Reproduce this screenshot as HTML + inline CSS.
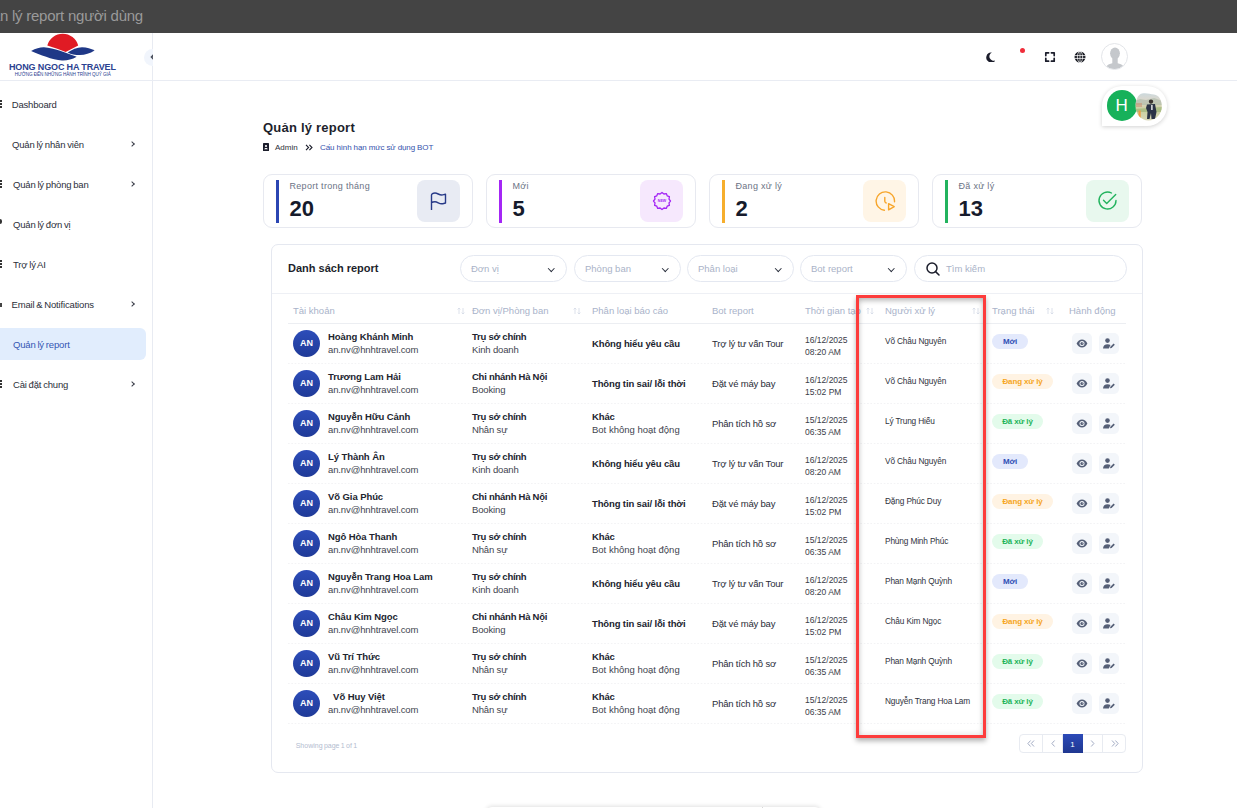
<!DOCTYPE html><html><head><meta charset="utf-8"><style>*{box-sizing:border-box;margin:0;padding:0}
html,body{width:1237px;height:808px;overflow:hidden;background:#fff;font-family:"Liberation Sans",sans-serif;color:#1f2230}
.abs{position:absolute}
svg{display:block}
#topbar{position:absolute;left:0;top:0;width:1237px;height:33px;background:#444444}
#topbar .t{position:absolute;top:7.1px;left:-27.7px;font-size:15px;color:#9a9a9a;white-space:nowrap;letter-spacing:-0.24px}
#side{position:absolute;left:0;top:33px;width:153px;height:775px;border-right:1px solid #e8ebf2;background:#fff}
#hdrline{position:absolute;left:0;top:80px;width:1237px;height:1px;background:#e9ecf3}
#logot{left:9px;top:61.6px;font-size:9px;font-weight:bold;color:#2a4190;white-space:nowrap;letter-spacing:-0.14px}
#logos{left:14.7px;top:71.6px;font-size:4.6px;color:#2a4190;white-space:nowrap;letter-spacing:-0.05px}
#collapse{left:144px;top:49px;width:17px;height:17px;border-radius:50%;background:#f1f5fc;clip-path:inset(0 9px 0 0)}
#collapse-chev{left:150.3px;top:55px;width:4.5px;height:4.5px;border-left:1.5px solid #4a4f5c;border-bottom:1.5px solid #4a4f5c;transform:rotate(45deg);clip-path:polygon(0 0,100% 0,0 100%)}
.mi{position:absolute;left:0;width:146px;height:32px;font-size:9.5px;color:#2c2f3a;white-space:nowrap;letter-spacing:-0.17px;word-spacing:-0.6px}
.mi span{position:absolute;top:11.3px}
.mi .chev{position:absolute;left:130px;top:14px;width:4px;height:4px;border-right:1px solid #3a3d48;border-top:1px solid #3a3d48;transform:rotate(45deg)}
.mi.active{background:#e1edfd;border-radius:6px;color:#3456b3;left:-10px;width:156px}
.mi.active span{margin-left:10px}
#avatar{left:1101px;top:43px;width:27px;height:27px}
#bubble{left:1101.5px;top:86px;width:65px;height:39.5px;background:#fff;border-radius:20px 20px 20px 0;box-shadow:0 1px 4px rgba(0,0,0,0.18)}
#bubH{left:1106.5px;top:90.2px;width:30.5px;height:30.5px;border-radius:50%;background:#17b15a;color:#fff;font-size:17px;text-align:center;line-height:31px}
#ptitle{left:263px;top:119.8px;font-size:13px;font-weight:bold;color:#1d1f2c;white-space:nowrap;letter-spacing:0.22px}
#bc1{left:275px;top:143px;font-size:8px;color:#2c2f3a;white-space:nowrap}
#bc2{left:320px;top:143px;font-size:8px;color:#3552ad;white-space:nowrap;letter-spacing:-0.12px}
.card{position:absolute;top:174px;width:210.3px;height:54px;border:1px solid #e7e9f0;border-radius:9px;background:#fff}
.card .bar{position:absolute;left:12px;top:4.5px;width:3px;height:43px}
.card .lbl{position:absolute;left:25.5px;top:6px;font-size:9px;color:#6b7385;white-space:nowrap;letter-spacing:0.3px}
.card .num{position:absolute;left:25.5px;top:20.5px;font-size:22px;font-weight:bold;color:#161b2c}
.card .ic{position:absolute;left:153px;top:4.8px;width:42.7px;height:42.5px;border-radius:8px}
#tcard{position:absolute;left:271px;top:244px;width:872px;height:529px;border:1px solid #e5e8f0;border-radius:7px;background:#fff}
#tctitle{left:288px;top:262px;font-size:11px;font-weight:bold;color:#1d1f2c;white-space:nowrap}
.pill{position:absolute;top:255px;width:107px;height:27px;border:1px solid #e4e8f1;border-radius:14px;font-size:9.5px;color:#aab3c8;white-space:nowrap;background:#fff}
.pill span{position:absolute;left:10px;top:7px}
.pill .dd{position:absolute;right:13px;top:9.5px;width:4.5px;height:4.5px;border-right:1.3px solid #2a2f3d;border-bottom:1.3px solid #2a2f3d;transform:rotate(45deg)}
.th{position:absolute;top:305px;font-size:9.5px;color:#a9b3ca;white-space:nowrap}
.sep{position:absolute;left:288px;width:838px;height:1.5px;background-image:linear-gradient(to right,#f3f3f5 50%,transparent 50%);background-size:3.33px 2px}
.av{position:absolute;left:293px;width:27px;height:27px;border-radius:50%;background:linear-gradient(180deg,#2d4db9,#1f3a98);color:#fff;font-size:9px;font-weight:bold;text-align:center;line-height:27px}
.nm{position:absolute;left:328px;font-size:9.5px;font-weight:bold;color:#22252f;white-space:nowrap;letter-spacing:-0.08px}
.em{position:absolute;left:328px;font-size:9.5px;color:#42454f;white-space:nowrap;letter-spacing:-0.12px}
.u1{position:absolute;left:472px;font-size:9.5px;font-weight:bold;color:#22252f;white-space:nowrap;letter-spacing:-0.25px}
.u2{position:absolute;left:472px;font-size:9.5px;color:#42454f;white-space:nowrap;letter-spacing:-0.15px}
.c1{position:absolute;left:592px;font-size:9.5px;font-weight:bold;color:#22252f;white-space:nowrap;letter-spacing:-0.13px}
.c2{position:absolute;left:592px;font-size:9.5px;color:#42454f;white-space:nowrap}
.bot{position:absolute;left:712px;font-size:9.5px;color:#2a2d38;white-space:nowrap;letter-spacing:-0.2px}
.dt{position:absolute;left:805px;font-size:8.5px;line-height:12px;color:#3a3d48;white-space:nowrap}
.hd{position:absolute;left:885px;font-size:8.3px;color:#30333d;white-space:nowrap;letter-spacing:-0.15px}
.badge{position:absolute;left:992px;height:15.2px;border-radius:8px;font-size:8px;font-weight:bold;text-align:center;line-height:15px;white-space:nowrap;letter-spacing:-0.12px}
.ab{position:absolute;width:20.3px;height:20.5px;border-radius:5px;background:#f3f6fa}
#showing{left:295.7px;top:742px;font-size:7px;color:#b3bccf;white-space:nowrap;word-spacing:-0.6px}
#pager{left:1018.5px;top:734px;width:107px;height:19px;border:1px solid #e8ebf1;border-radius:4px;background:#fff}
.pg{position:absolute;top:-1px;height:19px;border-right:1px solid #e8ebf1;font-size:10px;color:#9aa5c0;text-align:center;line-height:18px}
.pg.act{background:linear-gradient(180deg,#2c4ab8,#1f3790);color:#fff;font-size:8px;border-right:none;line-height:21px}
#redbox{left:856px;top:295px;width:130px;height:443px;border:3px solid #fd3c3c;box-shadow:0 3px 5px rgba(0,0,0,0.3), inset 0 4px 5px -1px rgba(0,0,0,0.2), inset 0 0 6px rgba(0,0,0,0.14)}
#botel{left:486px;top:806.5px;width:335px;height:20px;border-radius:6px;background:#fff;box-shadow:0 -1px 4px rgba(0,0,0,0.12)}
</style></head><body>
<div id="topbar"><div class="t">Quản lý report người dùng</div></div>
<div id="side"></div><div id="hdrline"></div>
<svg class="abs" style="left:25px;top:30px" width="80" height="35" viewBox="25 30 80 35">
<path d="M47.3 45.5 A16 16 0 0 1 78.2 45.6 C74 47.8, 70 49.8, 65.7 51.9 C60 49.6, 53 47.2, 47.3 45.5 Z" fill="#e01b24"/>
<path d="M31.1 51 C36 48.2, 40 47.1, 44 47.2 C54 47.8, 66 53, 76.7 56.8 C72 59.6, 67 60.7, 62 60.5 C52 59.9, 40 54.6, 31.1 51 Z" fill="#1f3887"/>
<path d="M67.7 52.4 C72 49.6, 77 47.3, 82 47.2 C87 47.2, 91 48.6, 94.6 50.6 C90 53.5, 85 55.1, 80 55.1 C75 55.1, 71 54.1, 67.7 52.4 Z" fill="#1f3887"/>
</svg>
<div class="abs" id="logot">HONG NGOC HA TRAVEL</div>
<div class="abs" id="logos">HƯỚNG ĐẾN NHỮNG HÀNH TRÌNH QUÝ GIÁ</div>
<div class="abs" style="left:140px;top:45px;width:12.5px;height:25px;overflow:hidden"><div class="abs" style="left:4px;top:3.5px;width:17px;height:17px;border-radius:50%;background:#f1f5fc"></div><svg class="abs" style="left:9.5px;top:8px" width="6" height="8" viewBox="0 0 6 8"><path d="M4.5 1L1.5 4L4.5 7" stroke="#4a4f5c" stroke-width="1.6" fill="none"/></svg></div>
<div class="mi" style="top:88px"><span style="left:11.7px">Dashboard</span></div>
<div class="mi" style="top:128px"><span style="left:12px">Quản lý nhân viên</span><i class="chev"></i></div>
<div class="mi" style="top:168px"><span style="left:13px">Quản lý phòng ban</span><i class="chev"></i></div>
<div class="mi" style="top:208px"><span style="left:13px">Quản lý đơn vị</span></div>
<div class="mi" style="top:248px"><span style="left:13px">Trợ lý AI</span></div>
<div class="mi" style="top:288px"><span style="left:11.5px">Email &amp; Notifications</span><i class="chev"></i></div>
<div class="mi active" style="top:328px"><span style="left:13px">Quản lý report</span></div>
<div class="mi" style="top:368px"><span style="left:13px">Cài đặt chung</span><i class="chev"></i></div>
<div class="abs" style="left:0;top:100px;width:2px;height:2px;background:#333"></div><div class="abs" style="left:0;top:103px;width:2px;height:2px;background:#333"></div><div class="abs" style="left:0;top:106px;width:2px;height:2px;background:#333"></div>
<div class="abs" style="left:0;top:180px;width:2px;height:2px;background:#333"></div><div class="abs" style="left:0;top:183px;width:2px;height:2px;background:#333"></div><div class="abs" style="left:0;top:186px;width:2px;height:2px;background:#333"></div>
<div class="abs" style="left:0;top:219px;width:2px;height:5px;background:#333;border-radius:0 2px 2px 0"></div>
<div class="abs" style="left:0;top:260px;width:2px;height:2px;background:#333"></div><div class="abs" style="left:0;top:263px;width:2px;height:2px;background:#333"></div><div class="abs" style="left:0;top:266px;width:2px;height:2px;background:#333"></div>
<div class="abs" style="left:0;top:303px;width:2px;height:4px;background:#444"></div>
<div class="abs" style="left:0;top:380px;width:2px;height:2px;background:#333"></div><div class="abs" style="left:0;top:383px;width:2px;height:2px;background:#333"></div><div class="abs" style="left:0;top:386px;width:2px;height:2px;background:#333"></div>
<svg class="abs" style="left:985.6px;top:51.6px" width="9.9" height="10.8" viewBox="0 0 11 12"><path d="M6.5 0.6 A5.6 5.6 0 1 0 10.6 9.2 A4.6 4.6 0 0 1 6.5 0.6 Z" fill="#1b1d2b"/></svg>
<div class="abs" style="left:1020px;top:48px;width:5px;height:5px;border-radius:50%;background:#f02d3a"></div>
<svg class="abs" style="left:1044px;top:51px" width="12" height="12" viewBox="0 0 12 12"><path d="M1.8 4.6V1.8H4.6M7.4 1.8H10.2V4.6M10.2 7.4V10.2H7.4M4.6 10.2H1.8V7.4" stroke="#1b1d2b" stroke-width="1.7" fill="none" stroke-linecap="round" stroke-linejoin="round"/></svg>
<svg class="abs" style="left:1074.3px;top:50.8px" width="12" height="12" viewBox="0 0 12 12"><circle cx="6" cy="6" r="5.5" fill="#15171f"/><g stroke="#fff" fill="none"><path d="M0.3 4.6H11.7M0.3 7.4H11.7" stroke-width="0.8"/><path d="M6 0.3V11.7" stroke-width="0.7"/><ellipse cx="6" cy="6" rx="2.6" ry="5.6" stroke-width="0.7"/></g></svg>
<div class="abs" id="avatar"><svg width="27" height="27" viewBox="0 0 27 27"><defs><clipPath id="avc"><circle cx="13.5" cy="13.5" r="12.6"/></clipPath></defs><circle cx="13.5" cy="13.5" r="12.6" fill="#fff"/><g clip-path="url(#avc)" fill="#c5c8cc"><ellipse cx="14" cy="10.3" rx="4.9" ry="5.9"/><path d="M11.3 14 h5.4 v6.3 c2.3 0.6 4.4 1.3 5.4 2.6 V27 H5.8 v-4.1 c1-1.3 3.1-2 5.5-2.6 z"/></g><circle cx="13.5" cy="13.5" r="13" fill="none" stroke="#e3e5e9" stroke-width="1"/></svg></div>
<div class="abs" id="bubble"></div>
<div class="abs" id="bubH">H</div>
<svg class="abs" style="left:1134px;top:92px" width="29" height="29" viewBox="0 0 29 29"><defs><clipPath id="phc"><path d="M1.5 14.5 C1.5 8 4 2.5 8 1.5 C12 0.5 16 2 20 2.5 C25 3 27.8 8 27.8 14.5 C27.8 22 22 28.5 14.5 28.5 C7 28.5 1.5 22 1.5 14.5 Z"/></clipPath><linearGradient id="sky" x1="0" y1="0" x2="0" y2="1"><stop offset="0" stop-color="#c9d9e0"/><stop offset="0.35" stop-color="#e2d8c8"/><stop offset="0.6" stop-color="#c8cf9e"/><stop offset="1" stop-color="#dad7b8"/></linearGradient></defs><g clip-path="url(#phc)"><rect width="29" height="29" fill="url(#sky)"/><path d="M0 9 L6 7 L12 8 L20 6 L29 9 V13 H0Z" fill="#a9b9a6" opacity="0.6"/><path d="M2 11 h6 v4 h-6z" fill="#c99474" opacity="0.6"/><path d="M0 17 L29 15 V20 H0Z" fill="#9fb77a" opacity="0.7"/><rect x="4.5" y="18.5" width="2.2" height="8" fill="#ee9c45"/><path d="M17 7.5c1.3 0 2.2 0.9 2.2 2.1s-0.9 2.1-2.2 2.1-2.2-0.9-2.2-2.1 0.9-2.1 2.2-2.1z" fill="#3a3430"/><path d="M13 12.5 L21 12 L22.5 20 L21 27 H17.5 L17 21 L15.5 27 H13 L13.5 20 L12 16z" fill="#2b3346"/><path d="M17.2 13 h1.4 v5 h-1.4z" fill="#f4f4f4"/></g></svg>
<div class="abs" id="ptitle">Quản lý report</div>
<svg class="abs" style="left:263px;top:143px" width="6" height="8" viewBox="0 0 6 8"><rect x="0" y="0" width="6" height="8" rx="0.6" fill="#1b1d2b"/><circle cx="3" cy="3" r="1.1" fill="#fff"/><path d="M1.2 6.3c0.3-1 1-1.4 1.8-1.4s1.5 0.4 1.8 1.4z" fill="#fff"/></svg>
<div class="abs" id="bc1">Admin</div>
<svg class="abs" style="left:305px;top:144px" width="8" height="7" viewBox="0 0 8 7"><path d="M1 0.8L3.6 3.5L1 6.2M4.4 0.8L7 3.5L4.4 6.2" stroke="#1b1d2b" stroke-width="1.1" fill="none"/></svg>
<div class="abs" id="bc2">Cấu hình hạn mức sử dụng BOT</div>
<div class="card" style="left:263px"><div class="bar" style="background:#2b46b3"></div><div class="lbl">Report trong tháng</div><div class="num">20</div><div class="ic" style="background:#e8ebf3"><div class="abs" style="left:13px;top:12px"><svg width="17" height="19" viewBox="0 0 17 19"><path d="M1.5 18V3C1.5 2 3 1 5 1C7.5 1 9 3 11.5 3C13 3 14 2.6 15.5 2.2V11C14 11.4 13 11.8 11.5 11.8C9 11.8 7.5 9.8 5 9.8C3 9.8 2 10.4 1.5 10.8" stroke="#283a88" stroke-width="1.4" fill="none" stroke-linejoin="round"/></svg></div></div></div>
<div class="card" style="left:486px"><div class="bar" style="background:#a426f5"></div><div class="lbl">Mới</div><div class="num">5</div><div class="ic" style="background:#f6e8fd"><div class="abs" style="left:11.5px;top:11px"><svg width="20" height="20" viewBox="0 0 20 20"><path d="M10 1.5l1.9 1.5 2.4-.4.9 2.2 2.2.9-.4 2.4L18.5 10l-1.5 1.9.4 2.4-2.2.9-.9 2.2-2.4-.4L10 18.5l-1.9-1.5-2.4.4-.9-2.2-2.2-.9.4-2.4L1.5 10l1.5-1.9-.4-2.4 2.2-.9.9-2.2 2.4.4z" stroke="#a426f5" stroke-width="1.3" fill="none" stroke-linejoin="round"/><text x="10" y="11.3" font-size="3.6" text-anchor="middle" fill="#a426f5" font-family="Liberation Sans" font-weight="bold">NEW</text></svg></div></div></div>
<div class="card" style="left:709px"><div class="bar" style="background:#f6ae2d"></div><div class="lbl">Đang xử lý</div><div class="num">2</div><div class="ic" style="background:#fff5e6"><div class="abs" style="left:11.5px;top:11px"><svg width="21" height="21" viewBox="0 0 21 21"><path d="M9.4 19.2A9.2 9.2 0 1 1 19.5 10.8" stroke="#f7a52a" stroke-width="1.4" fill="none" stroke-linecap="round"/><path d="M9.8 6.5V10.2C9.8 11 10.4 11.6 11.2 12" stroke="#f7a52a" stroke-width="1.4" fill="none" stroke-linecap="round"/><path d="M13.6 12.6L19.2 15.6L13.6 18.8Z" stroke="#f7a52a" stroke-width="1.4" fill="none" stroke-linejoin="round"/></svg></div></div></div>
<div class="card" style="left:932px"><div class="bar" style="background:#22b35e"></div><div class="lbl">Đã xử lý</div><div class="num">13</div><div class="ic" style="background:#e8f8ee"><div class="abs" style="left:11px;top:10.5px"><svg width="21" height="21" viewBox="0 0 21 21"><path d="M19 10.5A8.5 8.5 0 1 1 14.5 3" stroke="#22b35e" stroke-width="1.4" fill="none" stroke-linecap="round"/><path d="M6.5 10.2l3.2 3.2 9-9" stroke="#22b35e" stroke-width="1.4" fill="none" stroke-linecap="round" stroke-linejoin="round"/></svg></div></div></div>
<div id="tcard"></div>
<div class="abs" id="tctitle">Danh sách report</div>
<div class="abs" style="left:272px;top:293px;width:870px;height:1px;background:#eef0f5"></div>
<div class="pill" style="left:460px"><span>Đơn vị</span><i class="dd"></i></div>
<div class="pill" style="left:574px"><span>Phòng ban</span><i class="dd"></i></div>
<div class="pill" style="left:687px"><span>Phân loại</span><i class="dd"></i></div>
<div class="pill" style="left:800px"><span>Bot report</span><i class="dd"></i></div>
<div class="pill" style="left:914px;width:213px"><svg class="abs" style="left:11px;top:6px" width="14" height="14" viewBox="0 0 14 14"><circle cx="6" cy="6" r="5" stroke="#1b1d2b" stroke-width="1.5" fill="none"/><path d="M9.6 9.6L13 13" stroke="#1b1d2b" stroke-width="1.5" stroke-linecap="round"/></svg><span style="left:31px">Tìm kiếm</span></div>
<div class="th" style="left:293px">Tài khoản</div>
<svg class="abs" style="left:456.6px;top:307px" width="8" height="8" viewBox="0 0 8 8"><path d="M2 7V1M0.6 2.4L2 1L3.4 2.4M6 1v6M4.6 5.6L6 7L7.4 5.6" stroke="#d3d9e6" stroke-width="0.8" fill="none"/></svg>
<div class="th" style="left:472px">Đơn vị/Phòng ban</div>
<svg class="abs" style="left:572.6px;top:307px" width="8" height="8" viewBox="0 0 8 8"><path d="M2 7V1M0.6 2.4L2 1L3.4 2.4M6 1v6M4.6 5.6L6 7L7.4 5.6" stroke="#d3d9e6" stroke-width="0.8" fill="none"/></svg>
<div class="th" style="left:592px">Phân loại báo cáo</div>
<div class="th" style="left:712px">Bot report</div>
<div class="th" style="left:805px">Thời gian tạo</div>
<svg class="abs" style="left:865.6px;top:307px" width="8" height="8" viewBox="0 0 8 8"><path d="M2 7V1M0.6 2.4L2 1L3.4 2.4M6 1v6M4.6 5.6L6 7L7.4 5.6" stroke="#d3d9e6" stroke-width="0.8" fill="none"/></svg>
<div class="th" style="left:885px">Người xử lý</div>
<svg class="abs" style="left:971.6px;top:307px" width="8" height="8" viewBox="0 0 8 8"><path d="M2 7V1M0.6 2.4L2 1L3.4 2.4M6 1v6M4.6 5.6L6 7L7.4 5.6" stroke="#d3d9e6" stroke-width="0.8" fill="none"/></svg>
<div class="th" style="left:992px">Trạng thái</div>
<svg class="abs" style="left:1045.6px;top:307px" width="8" height="8" viewBox="0 0 8 8"><path d="M2 7V1M0.6 2.4L2 1L3.4 2.4M6 1v6M4.6 5.6L6 7L7.4 5.6" stroke="#d3d9e6" stroke-width="0.8" fill="none"/></svg>
<div class="th" style="left:1069px">Hành động</div>
<div class="abs" style="left:288px;top:322.8px;width:838px;height:1.4px;background:#eceef2"></div>
<div class="av" style="top:329.5px">AN</div>
<div class="nm" style="top:331px">Hoàng Khánh Minh</div><div class="em" style="top:344px">an.nv@hnhtravel.com</div>
<div class="u1" style="top:331px">Trụ sở chính</div><div class="u2" style="top:344px">Kinh doanh</div>
<div class="c1" style="top:338.3px">Không hiểu yêu cầu</div>
<div class="bot" style="top:338px">Trợ lý tư vấn Tour</div>
<div class="dt" style="top:334px">16/12/2025<br>08:20 AM</div>
<div class="hd" style="top:336px">Võ Châu Nguyên</div>
<div class="badge" style="top:334px;width:36px;background:#e3e9fc;color:#2f4fb5">Mới</div>
<div class="ab" style="left:1072px;top:333px"><div class="abs" style="left:4px;top:6px"><svg width="12" height="9" viewBox="0 0 12 9"><path d="M0.6 4.5C1.9 1.8 3.8 0.5 6 0.5S10.1 1.8 11.4 4.5C10.1 7.2 8.2 8.5 6 8.5S1.9 7.2 0.6 4.5Z" fill="#545e76"/><circle cx="6" cy="4.5" r="2.5" fill="#f3f6fa"/><circle cx="6" cy="4.5" r="1.6" fill="#545e76"/><path d="M6.1 3.3l0.9 0.9-0.9 0.3z" fill="#f3f6fa"/></svg></div></div>
<div class="ab" style="left:1099px;top:333px"><div class="abs" style="left:4px;top:4.5px"><svg width="12" height="11" viewBox="0 0 12 11"><circle cx="4.5" cy="2.6" r="2.3" fill="#545e76"/><path d="M0 10.5c0-2.8 2-4.3 4.5-4.3 1.2 0 2.2 0.3 3 0.9L5.8 10.5z" fill="#545e76"/><path d="M7 10.3l0.4-1.6 3.2-3.2 1.2 1.2-3.2 3.2z" fill="#545e76"/></svg></div></div>
<div class="sep" style="top:362.5px"></div>
<div class="av" style="top:369.5px">AN</div>
<div class="nm" style="top:371px">Trương Lam Hải</div><div class="em" style="top:384px">an.nv@hnhtravel.com</div>
<div class="u1" style="top:371px">Chi nhánh Hà Nội</div><div class="u2" style="top:384px">Booking</div>
<div class="c1" style="top:378.3px">Thông tin sai/ lỗi thời</div>
<div class="bot" style="top:378px">Đặt vé máy bay</div>
<div class="dt" style="top:374px">16/12/2025<br>15:02 PM</div>
<div class="hd" style="top:376px">Võ Châu Nguyên</div>
<div class="badge" style="top:374px;width:61px;background:#fff3e3;color:#f6a623">Đang xử lý</div>
<div class="ab" style="left:1072px;top:373px"><div class="abs" style="left:4px;top:6px"><svg width="12" height="9" viewBox="0 0 12 9"><path d="M0.6 4.5C1.9 1.8 3.8 0.5 6 0.5S10.1 1.8 11.4 4.5C10.1 7.2 8.2 8.5 6 8.5S1.9 7.2 0.6 4.5Z" fill="#545e76"/><circle cx="6" cy="4.5" r="2.5" fill="#f3f6fa"/><circle cx="6" cy="4.5" r="1.6" fill="#545e76"/><path d="M6.1 3.3l0.9 0.9-0.9 0.3z" fill="#f3f6fa"/></svg></div></div>
<div class="ab" style="left:1099px;top:373px"><div class="abs" style="left:4px;top:4.5px"><svg width="12" height="11" viewBox="0 0 12 11"><circle cx="4.5" cy="2.6" r="2.3" fill="#545e76"/><path d="M0 10.5c0-2.8 2-4.3 4.5-4.3 1.2 0 2.2 0.3 3 0.9L5.8 10.5z" fill="#545e76"/><path d="M7 10.3l0.4-1.6 3.2-3.2 1.2 1.2-3.2 3.2z" fill="#545e76"/></svg></div></div>
<div class="sep" style="top:402.5px"></div>
<div class="av" style="top:409.5px">AN</div>
<div class="nm" style="top:411px">Nguyễn Hữu Cảnh</div><div class="em" style="top:424px">an.nv@hnhtravel.com</div>
<div class="u1" style="top:411px">Trụ sở chính</div><div class="u2" style="top:424px">Nhân sự</div>
<div class="c1" style="top:411px">Khác</div><div class="c2" style="top:424px">Bot không hoạt động</div>
<div class="bot" style="top:418px">Phân tích hồ sơ</div>
<div class="dt" style="top:414px">15/12/2025<br>06:35 AM</div>
<div class="hd" style="top:416px">Lý Trung Hiếu</div>
<div class="badge" style="top:414px;width:51px;background:#e3fbeb;color:#1db45a">Đã xử lý</div>
<div class="ab" style="left:1072px;top:413px"><div class="abs" style="left:4px;top:6px"><svg width="12" height="9" viewBox="0 0 12 9"><path d="M0.6 4.5C1.9 1.8 3.8 0.5 6 0.5S10.1 1.8 11.4 4.5C10.1 7.2 8.2 8.5 6 8.5S1.9 7.2 0.6 4.5Z" fill="#545e76"/><circle cx="6" cy="4.5" r="2.5" fill="#f3f6fa"/><circle cx="6" cy="4.5" r="1.6" fill="#545e76"/><path d="M6.1 3.3l0.9 0.9-0.9 0.3z" fill="#f3f6fa"/></svg></div></div>
<div class="ab" style="left:1099px;top:413px"><div class="abs" style="left:4px;top:4.5px"><svg width="12" height="11" viewBox="0 0 12 11"><circle cx="4.5" cy="2.6" r="2.3" fill="#545e76"/><path d="M0 10.5c0-2.8 2-4.3 4.5-4.3 1.2 0 2.2 0.3 3 0.9L5.8 10.5z" fill="#545e76"/><path d="M7 10.3l0.4-1.6 3.2-3.2 1.2 1.2-3.2 3.2z" fill="#545e76"/></svg></div></div>
<div class="sep" style="top:442.5px"></div>
<div class="av" style="top:449.5px">AN</div>
<div class="nm" style="top:451px">Lý Thành Ân</div><div class="em" style="top:464px">an.nv@hnhtravel.com</div>
<div class="u1" style="top:451px">Trụ sở chính</div><div class="u2" style="top:464px">Kinh doanh</div>
<div class="c1" style="top:458.3px">Không hiểu yêu cầu</div>
<div class="bot" style="top:458px">Trợ lý tư vấn Tour</div>
<div class="dt" style="top:454px">16/12/2025<br>08:20 AM</div>
<div class="hd" style="top:456px">Võ Châu Nguyên</div>
<div class="badge" style="top:454px;width:36px;background:#e3e9fc;color:#2f4fb5">Mới</div>
<div class="ab" style="left:1072px;top:453px"><div class="abs" style="left:4px;top:6px"><svg width="12" height="9" viewBox="0 0 12 9"><path d="M0.6 4.5C1.9 1.8 3.8 0.5 6 0.5S10.1 1.8 11.4 4.5C10.1 7.2 8.2 8.5 6 8.5S1.9 7.2 0.6 4.5Z" fill="#545e76"/><circle cx="6" cy="4.5" r="2.5" fill="#f3f6fa"/><circle cx="6" cy="4.5" r="1.6" fill="#545e76"/><path d="M6.1 3.3l0.9 0.9-0.9 0.3z" fill="#f3f6fa"/></svg></div></div>
<div class="ab" style="left:1099px;top:453px"><div class="abs" style="left:4px;top:4.5px"><svg width="12" height="11" viewBox="0 0 12 11"><circle cx="4.5" cy="2.6" r="2.3" fill="#545e76"/><path d="M0 10.5c0-2.8 2-4.3 4.5-4.3 1.2 0 2.2 0.3 3 0.9L5.8 10.5z" fill="#545e76"/><path d="M7 10.3l0.4-1.6 3.2-3.2 1.2 1.2-3.2 3.2z" fill="#545e76"/></svg></div></div>
<div class="sep" style="top:482.5px"></div>
<div class="av" style="top:489.5px">AN</div>
<div class="nm" style="top:491px">Võ Gia Phúc</div><div class="em" style="top:504px">an.nv@hnhtravel.com</div>
<div class="u1" style="top:491px">Chi nhánh Hà Nội</div><div class="u2" style="top:504px">Booking</div>
<div class="c1" style="top:498.3px">Thông tin sai/ lỗi thời</div>
<div class="bot" style="top:498px">Đặt vé máy bay</div>
<div class="dt" style="top:494px">16/12/2025<br>15:02 PM</div>
<div class="hd" style="top:496px">Đặng Phúc Duy</div>
<div class="badge" style="top:494px;width:61px;background:#fff3e3;color:#f6a623">Đang xử lý</div>
<div class="ab" style="left:1072px;top:493px"><div class="abs" style="left:4px;top:6px"><svg width="12" height="9" viewBox="0 0 12 9"><path d="M0.6 4.5C1.9 1.8 3.8 0.5 6 0.5S10.1 1.8 11.4 4.5C10.1 7.2 8.2 8.5 6 8.5S1.9 7.2 0.6 4.5Z" fill="#545e76"/><circle cx="6" cy="4.5" r="2.5" fill="#f3f6fa"/><circle cx="6" cy="4.5" r="1.6" fill="#545e76"/><path d="M6.1 3.3l0.9 0.9-0.9 0.3z" fill="#f3f6fa"/></svg></div></div>
<div class="ab" style="left:1099px;top:493px"><div class="abs" style="left:4px;top:4.5px"><svg width="12" height="11" viewBox="0 0 12 11"><circle cx="4.5" cy="2.6" r="2.3" fill="#545e76"/><path d="M0 10.5c0-2.8 2-4.3 4.5-4.3 1.2 0 2.2 0.3 3 0.9L5.8 10.5z" fill="#545e76"/><path d="M7 10.3l0.4-1.6 3.2-3.2 1.2 1.2-3.2 3.2z" fill="#545e76"/></svg></div></div>
<div class="sep" style="top:522.5px"></div>
<div class="av" style="top:529.5px">AN</div>
<div class="nm" style="top:531px">Ngô Hòa Thanh</div><div class="em" style="top:544px">an.nv@hnhtravel.com</div>
<div class="u1" style="top:531px">Trụ sở chính</div><div class="u2" style="top:544px">Nhân sự</div>
<div class="c1" style="top:531px">Khác</div><div class="c2" style="top:544px">Bot không hoạt động</div>
<div class="bot" style="top:538px">Phân tích hồ sơ</div>
<div class="dt" style="top:534px">15/12/2025<br>06:35 AM</div>
<div class="hd" style="top:536px">Phùng Minh Phúc</div>
<div class="badge" style="top:534px;width:51px;background:#e3fbeb;color:#1db45a">Đã xử lý</div>
<div class="ab" style="left:1072px;top:533px"><div class="abs" style="left:4px;top:6px"><svg width="12" height="9" viewBox="0 0 12 9"><path d="M0.6 4.5C1.9 1.8 3.8 0.5 6 0.5S10.1 1.8 11.4 4.5C10.1 7.2 8.2 8.5 6 8.5S1.9 7.2 0.6 4.5Z" fill="#545e76"/><circle cx="6" cy="4.5" r="2.5" fill="#f3f6fa"/><circle cx="6" cy="4.5" r="1.6" fill="#545e76"/><path d="M6.1 3.3l0.9 0.9-0.9 0.3z" fill="#f3f6fa"/></svg></div></div>
<div class="ab" style="left:1099px;top:533px"><div class="abs" style="left:4px;top:4.5px"><svg width="12" height="11" viewBox="0 0 12 11"><circle cx="4.5" cy="2.6" r="2.3" fill="#545e76"/><path d="M0 10.5c0-2.8 2-4.3 4.5-4.3 1.2 0 2.2 0.3 3 0.9L5.8 10.5z" fill="#545e76"/><path d="M7 10.3l0.4-1.6 3.2-3.2 1.2 1.2-3.2 3.2z" fill="#545e76"/></svg></div></div>
<div class="sep" style="top:562.5px"></div>
<div class="av" style="top:569.5px">AN</div>
<div class="nm" style="top:571px">Nguyễn Trang Hoa Lam</div><div class="em" style="top:584px">an.nv@hnhtravel.com</div>
<div class="u1" style="top:571px">Trụ sở chính</div><div class="u2" style="top:584px">Kinh doanh</div>
<div class="c1" style="top:578.3px">Không hiểu yêu cầu</div>
<div class="bot" style="top:578px">Trợ lý tư vấn Tour</div>
<div class="dt" style="top:574px">16/12/2025<br>08:20 AM</div>
<div class="hd" style="top:576px">Phan Mạnh Quỳnh</div>
<div class="badge" style="top:574px;width:36px;background:#e3e9fc;color:#2f4fb5">Mới</div>
<div class="ab" style="left:1072px;top:573px"><div class="abs" style="left:4px;top:6px"><svg width="12" height="9" viewBox="0 0 12 9"><path d="M0.6 4.5C1.9 1.8 3.8 0.5 6 0.5S10.1 1.8 11.4 4.5C10.1 7.2 8.2 8.5 6 8.5S1.9 7.2 0.6 4.5Z" fill="#545e76"/><circle cx="6" cy="4.5" r="2.5" fill="#f3f6fa"/><circle cx="6" cy="4.5" r="1.6" fill="#545e76"/><path d="M6.1 3.3l0.9 0.9-0.9 0.3z" fill="#f3f6fa"/></svg></div></div>
<div class="ab" style="left:1099px;top:573px"><div class="abs" style="left:4px;top:4.5px"><svg width="12" height="11" viewBox="0 0 12 11"><circle cx="4.5" cy="2.6" r="2.3" fill="#545e76"/><path d="M0 10.5c0-2.8 2-4.3 4.5-4.3 1.2 0 2.2 0.3 3 0.9L5.8 10.5z" fill="#545e76"/><path d="M7 10.3l0.4-1.6 3.2-3.2 1.2 1.2-3.2 3.2z" fill="#545e76"/></svg></div></div>
<div class="sep" style="top:602.5px"></div>
<div class="av" style="top:609.5px">AN</div>
<div class="nm" style="top:611px">Châu Kim Ngọc</div><div class="em" style="top:624px">an.nv@hnhtravel.com</div>
<div class="u1" style="top:611px">Chi nhánh Hà Nội</div><div class="u2" style="top:624px">Booking</div>
<div class="c1" style="top:618.3px">Thông tin sai/ lỗi thời</div>
<div class="bot" style="top:618px">Đặt vé máy bay</div>
<div class="dt" style="top:614px">16/12/2025<br>15:02 PM</div>
<div class="hd" style="top:616px">Châu Kim Ngọc</div>
<div class="badge" style="top:614px;width:61px;background:#fff3e3;color:#f6a623">Đang xử lý</div>
<div class="ab" style="left:1072px;top:613px"><div class="abs" style="left:4px;top:6px"><svg width="12" height="9" viewBox="0 0 12 9"><path d="M0.6 4.5C1.9 1.8 3.8 0.5 6 0.5S10.1 1.8 11.4 4.5C10.1 7.2 8.2 8.5 6 8.5S1.9 7.2 0.6 4.5Z" fill="#545e76"/><circle cx="6" cy="4.5" r="2.5" fill="#f3f6fa"/><circle cx="6" cy="4.5" r="1.6" fill="#545e76"/><path d="M6.1 3.3l0.9 0.9-0.9 0.3z" fill="#f3f6fa"/></svg></div></div>
<div class="ab" style="left:1099px;top:613px"><div class="abs" style="left:4px;top:4.5px"><svg width="12" height="11" viewBox="0 0 12 11"><circle cx="4.5" cy="2.6" r="2.3" fill="#545e76"/><path d="M0 10.5c0-2.8 2-4.3 4.5-4.3 1.2 0 2.2 0.3 3 0.9L5.8 10.5z" fill="#545e76"/><path d="M7 10.3l0.4-1.6 3.2-3.2 1.2 1.2-3.2 3.2z" fill="#545e76"/></svg></div></div>
<div class="sep" style="top:642.5px"></div>
<div class="av" style="top:649.5px">AN</div>
<div class="nm" style="top:651px">Vũ Trí Thức</div><div class="em" style="top:664px">an.nv@hnhtravel.com</div>
<div class="u1" style="top:651px">Trụ sở chính</div><div class="u2" style="top:664px">Nhân sự</div>
<div class="c1" style="top:651px">Khác</div><div class="c2" style="top:664px">Bot không hoạt động</div>
<div class="bot" style="top:658px">Phân tích hồ sơ</div>
<div class="dt" style="top:654px">15/12/2025<br>06:35 AM</div>
<div class="hd" style="top:656px">Phan Mạnh Quỳnh</div>
<div class="badge" style="top:654px;width:51px;background:#e3fbeb;color:#1db45a">Đã xử lý</div>
<div class="ab" style="left:1072px;top:653px"><div class="abs" style="left:4px;top:6px"><svg width="12" height="9" viewBox="0 0 12 9"><path d="M0.6 4.5C1.9 1.8 3.8 0.5 6 0.5S10.1 1.8 11.4 4.5C10.1 7.2 8.2 8.5 6 8.5S1.9 7.2 0.6 4.5Z" fill="#545e76"/><circle cx="6" cy="4.5" r="2.5" fill="#f3f6fa"/><circle cx="6" cy="4.5" r="1.6" fill="#545e76"/><path d="M6.1 3.3l0.9 0.9-0.9 0.3z" fill="#f3f6fa"/></svg></div></div>
<div class="ab" style="left:1099px;top:653px"><div class="abs" style="left:4px;top:4.5px"><svg width="12" height="11" viewBox="0 0 12 11"><circle cx="4.5" cy="2.6" r="2.3" fill="#545e76"/><path d="M0 10.5c0-2.8 2-4.3 4.5-4.3 1.2 0 2.2 0.3 3 0.9L5.8 10.5z" fill="#545e76"/><path d="M7 10.3l0.4-1.6 3.2-3.2 1.2 1.2-3.2 3.2z" fill="#545e76"/></svg></div></div>
<div class="sep" style="top:682.5px"></div>
<div class="av" style="top:689.5px">AN</div>
<div class="nm" style="top:691px">&nbsp;&nbsp;Võ Huy Việt</div><div class="em" style="top:704px">an.nv@hnhtravel.com</div>
<div class="u1" style="top:691px">Trụ sở chính</div><div class="u2" style="top:704px">Nhân sự</div>
<div class="c1" style="top:691px">Khác</div><div class="c2" style="top:704px">Bot không hoạt động</div>
<div class="bot" style="top:698px">Phân tích hồ sơ</div>
<div class="dt" style="top:694px">15/12/2025<br>06:35 AM</div>
<div class="hd" style="top:696px">Nguyễn Trang Hoa Lam</div>
<div class="badge" style="top:694px;width:51px;background:#e3fbeb;color:#1db45a">Đã xử lý</div>
<div class="ab" style="left:1072px;top:693px"><div class="abs" style="left:4px;top:6px"><svg width="12" height="9" viewBox="0 0 12 9"><path d="M0.6 4.5C1.9 1.8 3.8 0.5 6 0.5S10.1 1.8 11.4 4.5C10.1 7.2 8.2 8.5 6 8.5S1.9 7.2 0.6 4.5Z" fill="#545e76"/><circle cx="6" cy="4.5" r="2.5" fill="#f3f6fa"/><circle cx="6" cy="4.5" r="1.6" fill="#545e76"/><path d="M6.1 3.3l0.9 0.9-0.9 0.3z" fill="#f3f6fa"/></svg></div></div>
<div class="ab" style="left:1099px;top:693px"><div class="abs" style="left:4px;top:4.5px"><svg width="12" height="11" viewBox="0 0 12 11"><circle cx="4.5" cy="2.6" r="2.3" fill="#545e76"/><path d="M0 10.5c0-2.8 2-4.3 4.5-4.3 1.2 0 2.2 0.3 3 0.9L5.8 10.5z" fill="#545e76"/><path d="M7 10.3l0.4-1.6 3.2-3.2 1.2 1.2-3.2 3.2z" fill="#545e76"/></svg></div></div>
<div class="sep" style="top:722.5px"></div>
<div class="abs" id="showing">Showing page 1 of 1</div>
<div class="abs" id="pager"><div class="pg" style="left:0;width:23px"><svg class="abs" style="left:7px;top:6px" width="8" height="7" viewBox="0 0 8 7"><path d="M3.6 0.5L0.9 3.5L3.6 6.5M7 0.5L4.3 3.5L7 6.5" stroke="#98a3bd" stroke-width="0.9" fill="none"/></svg></div><div class="pg" style="left:23px;width:20px"><svg class="abs" style="left:8px;top:6px" width="5" height="7" viewBox="0 0 5 7"><path d="M3.6 0.5L0.9 3.5L3.6 6.5" stroke="#98a3bd" stroke-width="0.9" fill="none"/></svg></div><div class="pg act" style="left:43px;width:20px">1</div><div class="pg" style="left:63px;width:20px"><svg class="abs" style="left:7.5px;top:6px" width="5" height="7" viewBox="0 0 5 7"><path d="M1.2 0.5L3.9 3.5L1.2 6.5" stroke="#98a3bd" stroke-width="0.9" fill="none"/></svg></div><div class="pg" style="left:83px;width:24px;border-right:none"><svg class="abs" style="left:8px;top:6px" width="8" height="7" viewBox="0 0 8 7"><path d="M1 0.5L3.7 3.5L1 6.5M4.4 0.5L7.1 3.5L4.4 6.5" stroke="#98a3bd" stroke-width="0.9" fill="none"/></svg></div></div>
<div class="abs" id="redbox"></div>
<div class="abs" id="botel"></div><div class="abs" style="left:762px;top:807px;width:1px;height:2px;background:#d8d8d8"></div>
</body></html>
